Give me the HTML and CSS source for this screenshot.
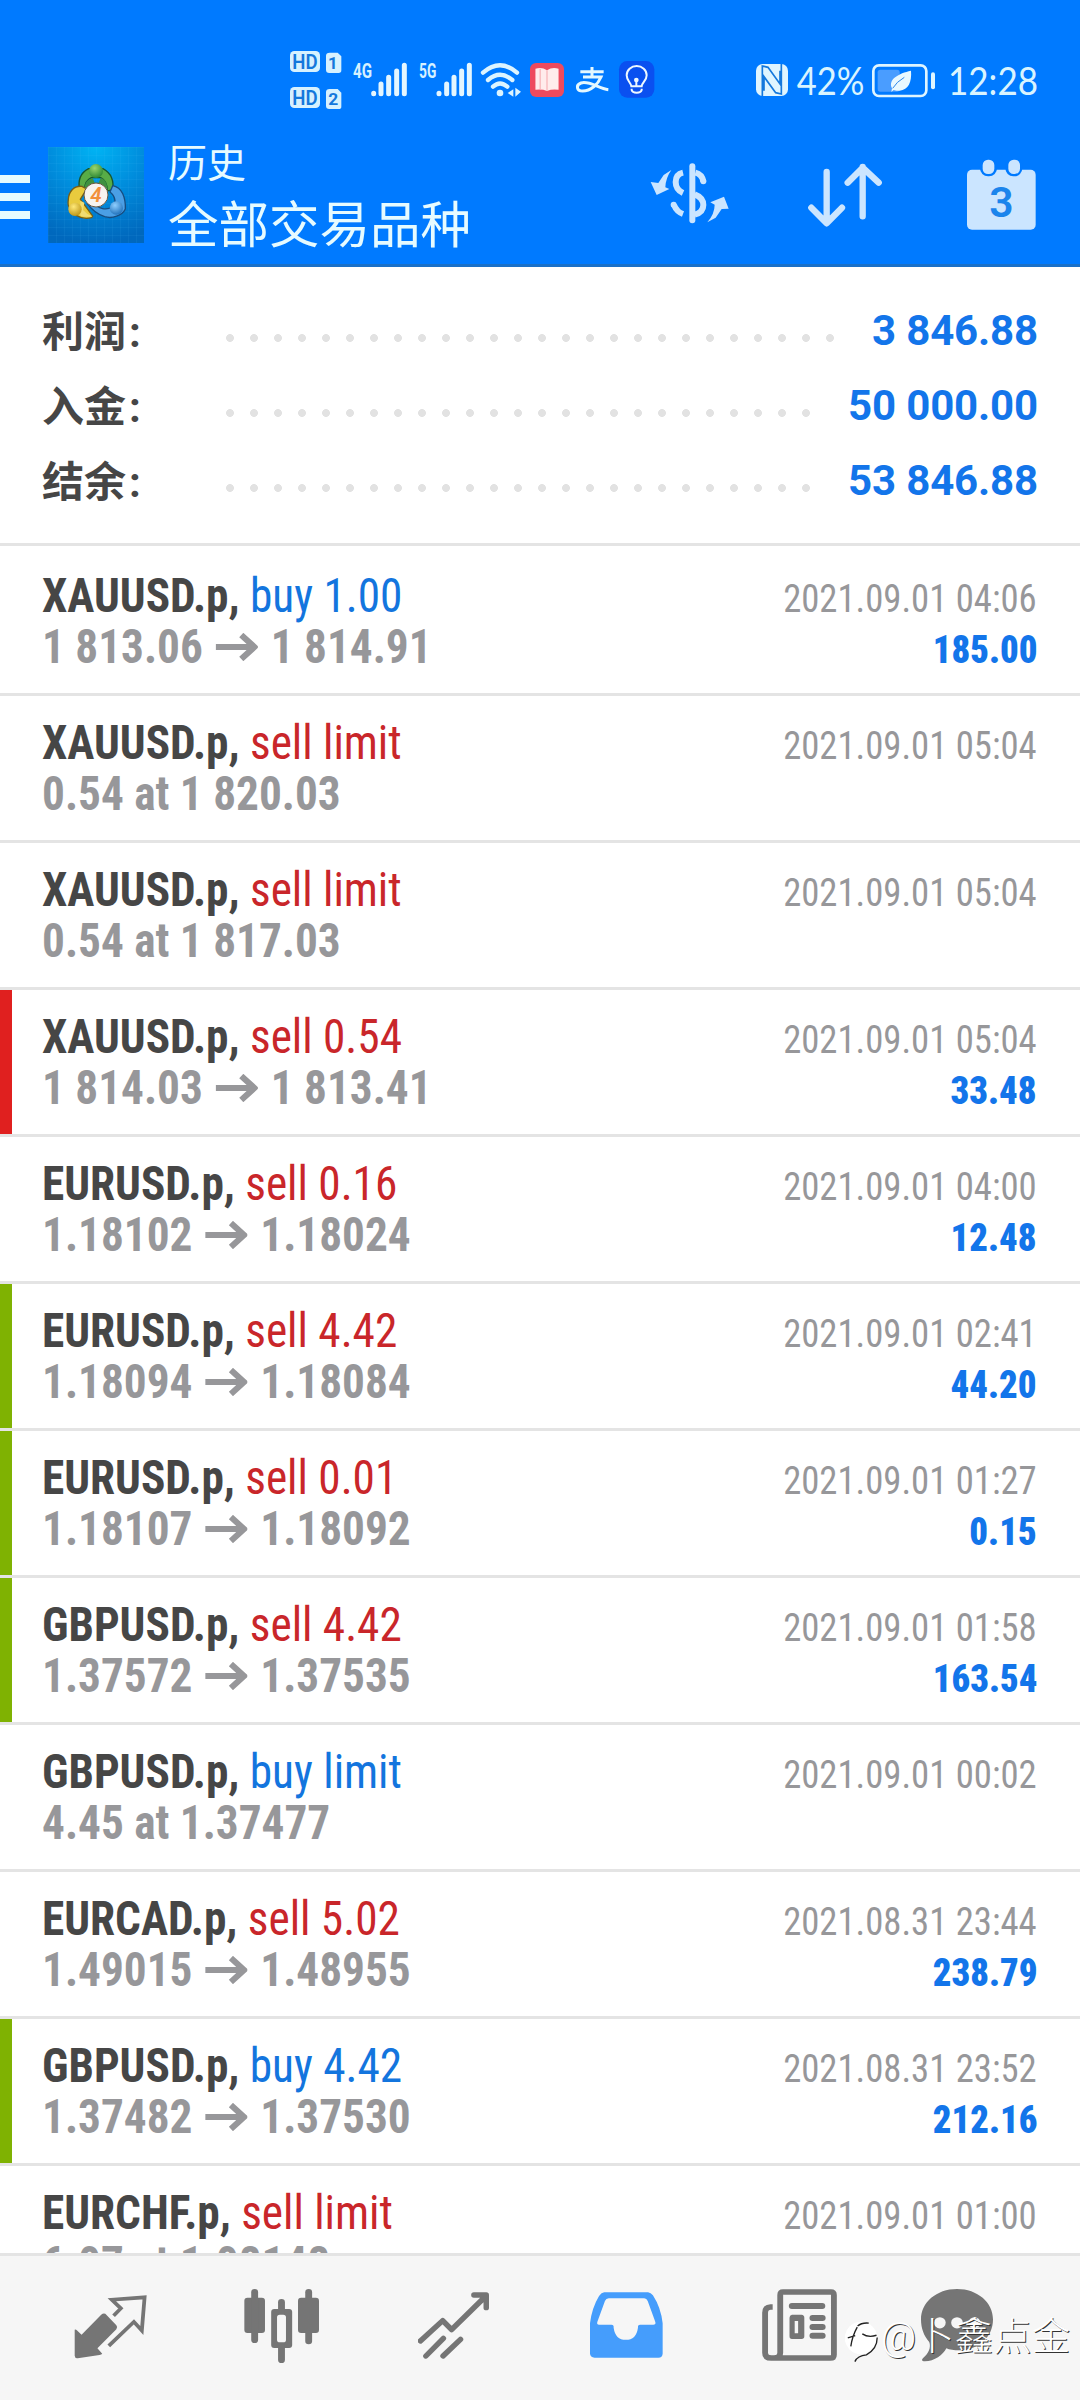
FILE: index.html
```html
<!DOCTYPE html>
<html lang="zh-CN">
<head>
<meta charset="utf-8">
<title>历史</title>
<link rel="stylesheet" href="styles.css">
</head>
<body>
<div class="screen">
  <header class="top">
    <div class="statusbar">
      <svg class="st-hd" width="52" height="58" viewBox="0 0 156 174">
        <g fill="#d6f1ff"><rect x="0" y="0" width="90" height="63" rx="13"/><path d="M119 5h24l11 11v42q0 8-8 8h-28q-10 0-10-9V14q0-9 11-9z"/><rect x="0" y="108" width="90" height="63" rx="13"/><path d="M119 114h24l11 11v42q0 7-8 7h-28q-10 0-10-9v-42q0-9 11-9z"/></g>
        <g fill="#1478dc" font-family="Roboto" font-weight="600" font-size="59"><text x="7" y="53" textLength="76" lengthAdjust="spacingAndGlyphs">HD</text><text x="7" y="161" textLength="76" lengthAdjust="spacingAndGlyphs">HD</text><text x="114" y="53" font-size="49" font-weight="700" textLength="29" lengthAdjust="spacingAndGlyphs">1</text><text x="115" y="163" font-size="49" font-weight="700" textLength="30" lengthAdjust="spacingAndGlyphs">2</text></g>
      </svg>
      <svg class="st-4g" width="54" height="34" viewBox="0 0 162 102">
        <text x="0" y="44" font-family="Roboto" font-weight="700" font-size="59" fill="#d6f1ff" textLength="57" lengthAdjust="spacingAndGlyphs">4G</text>
        <path d="M62 91v1M84 63v29M107 43v49M131 24v68M154 7v85" stroke="#e4f6ff" stroke-width="15" stroke-linecap="round"/>
      </svg>
      <svg class="st-5g" width="54" height="34" viewBox="0 0 162 102">
        <text x="0" y="44" font-family="Roboto" font-weight="700" font-size="59" fill="#d6f1ff" textLength="52" lengthAdjust="spacingAndGlyphs">5G</text>
        <path d="M60 91v1M83 63v29M105 43v49M128 24v68M151 7v85" stroke="#e4f6ff" stroke-width="15" stroke-linecap="round"/>
      </svg>
      <svg class="st-wifi" width="41" height="34" viewBox="0 0 123 102">
        <path d="M6 29Q57-15 108 29M21 51Q57 20 94 51M36 71Q57 52 79 71" fill="none" stroke="#dcf4ff" stroke-width="13" stroke-linecap="round"/><circle cx="57" cy="90" r="10" fill="#dcf4ff"/><path d="M97 79v22l-17-11zM103 74v27l17-15z" fill="#dcf4ff"/>
      </svg>
      <svg class="st-book" width="34" height="34" viewBox="0 0 100 100"><rect width="100" height="100" rx="18" fill="#ee4a5e"/><path d="M16 17q18-6 34 4 16-10 34-4v62q-18-3-34 3-16-6-34-3z" fill="#ffecec"/><path d="M50 21v61M30 17v60" stroke="#f8b9bd" stroke-width="4"/></svg>
      <svg class="st-zhi" width="34" height="26" viewBox="0 0 100 78"><g fill="none" stroke="#e4f8ff" stroke-width="9"><path d="M12 14h70M47 0v30M20 30h54C65 52 43 72 19 72 0 72-2 54 14 48c25-8 53 17 82 20"/></g></svg>
      <svg class="st-bulb" width="36" height="37" viewBox="0 0 108 111"><rect width="106" height="110" rx="25" fill="#0a50f0"/><g fill="none" stroke="#eef8ff" stroke-width="6"><path d="M37 76c-2-13-14-17-14-33a30 28 0 0 1 60 0c0 16-13 20-15 33zM38 83v4q2 8 15 8t15-8v-4M52 55v20"/></g><circle cx="52" cy="57" r="7" fill="#eef8ff"/></svg>
      <svg class="st-nfc" width="32" height="32" viewBox="0 0 96 96"><rect width="96" height="96" rx="20" fill="#dff5ff"/><path d="M19 96V6l17 4 36 50V20M76 0v90l-17-4L24 38v42" fill="none" stroke="#1478dc" stroke-width="5"/></svg>
      <svg class="st-pct" width="67" height="34" viewBox="0 0 201 102"><text x="-4" y="91" font-family="Lato" font-size="113" fill="#d9f4ff" textLength="203" lengthAdjust="spacingAndGlyphs">42%</text></svg>
      <svg class="st-bat" width="63" height="34" viewBox="0 0 189 102"><rect x="4" y="4" width="159" height="92" rx="17" fill="none" stroke="#dff5ff" stroke-width="8"/><rect x="17" y="17" width="66" height="66" rx="8" fill="#4a9dff"/><path d="M117 20c3 34-8 57-34 60-9 1-15-1-18-2l-7 6 2-11c-13-27 20-45 57-53z" fill="#eaf9ff"/><path d="M62 73q12-20 35-33" fill="none" stroke="#2d87ea" stroke-width="3"/><rect x="177" y="25" width="12" height="51" rx="6" fill="#dff5ff"/></svg>
      <svg class="st-time" width="88" height="34" viewBox="0 0 264 102"><text x="-9" y="91" font-family="Lato" font-size="113" fill="#d9f4ff" textLength="270" lengthAdjust="spacingAndGlyphs">12:28</text></svg>
    </div>
    <div class="appbar">
      <svg class="burger" width="30" height="44" viewBox="0 0 30 44"><path d="M0 4h30M0 22h30M0 40h30" stroke="#e6fbff" stroke-width="8"/></svg>
      <svg class="logo" width="96" height="96" viewBox="0 0 288 288">
        <defs>
          <radialGradient id="sky" cx=".5" cy="0" r="1"><stop offset="0" stop-color="#00b4f4"/><stop offset=".5" stop-color="#008cdc"/><stop offset="1" stop-color="#0068bd"/></radialGradient>
          <radialGradient id="gr" cx=".4" cy=".3" r=".8"><stop offset="0" stop-color="#9ad66f"/><stop offset="1" stop-color="#1f7d2c"/></radialGradient>
          <radialGradient id="ye" cx=".4" cy=".3" r=".8"><stop offset="0" stop-color="#ffe978"/><stop offset="1" stop-color="#b78d0d"/></radialGradient>
          <radialGradient id="bl" cx=".4" cy=".3" r=".8"><stop offset="0" stop-color="#8fcfff"/><stop offset="1" stop-color="#1467b4"/></radialGradient>
          <pattern id="grid" width="24" height="24" patternUnits="userSpaceOnUse"><path d="M0 0h24M0 0v24" stroke="#5cc8ff" stroke-opacity=".22" stroke-width="2"/></pattern>
        </defs>
        <rect width="288" height="288" fill="url(#sky)"/><rect width="288" height="288" fill="url(#grid)"/>
        <path d="M122 65c-28 14-32 40-27 65l15-4c0-16 8-28 20-34h28c16 8 20 22 20 40l15-3c6-25-2-50-28-64z" fill="#58ac46" stroke="#18562d" stroke-width="4"/>
        <path d="M110 126c0-20 10-30 24-33l6 14h12l6-14c14 4 20 16 20 36z" fill="#3f9140"/>
        <path d="M102 118c-25-3-40 17-41 39-1 8-2 18 2 22 7 21 30 35 52 35 12 0 19-3 19-7l-37-50 19-31z" fill="#e9cb3e" stroke="#765e16" stroke-width="4"/>
        <path d="M194 116c29 5 39 37 38 70-9 20-40 30-62 23-22-8-41-23-52-40l16-6c17 25 42 27 59 17 11-9 12-29-7-45z" fill="#4b9fe5" stroke="#174d80" stroke-width="4"/>
        <path d="M97 161l12 6-4 22q10 12 28 19-18 4-36-2z" fill="#f0dc72"/>
        <circle cx="144" cy="72" r="21" fill="url(#gr)"/><circle cx="81" cy="187" r="20" fill="url(#ye)"/><circle cx="205" cy="183" r="20" fill="url(#bl)"/>
        <circle cx="144" cy="144" r="36" fill="#f7f3f0" stroke="#6b5a45" stroke-width="3"/>
        <text x="144" y="165" text-anchor="middle" font-family="Roboto" font-style="italic" font-weight="600" font-size="62" fill="#f2903a">4</text>
      </svg>
      <div class="titles"><div class="t1">历史</div><div class="t2">全部交易品种</div></div>
      <div class="actions">
        <svg width="79" height="62" viewBox="0 0 237 186"><g fill="none" stroke="#cbe5ff" stroke-width="18"><path d="M127 10v162" stroke-linecap="round"/><path d="M99 29Q77 34 77 57T99 90M72 126Q80 146 99 153M136 29Q156 34 160 55M134 94Q160 104 160 126T134 155"/></g><g fill="#cbe5ff"><circle cx="160" cy="55" r="9"/><circle cx="71" cy="125" r="9"/><path d="M64 21 41 36 25 60 2 57l18 39 38-18-12-5q1-28 18-52zM172 178l25-14 18-26 21-1-14-36-41 17 13 7q0 27-22 53z"/></g></svg>
        <svg width="74" height="64" viewBox="0 0 222 192"><path d="M56 27v150M10 134l46 47 46-47M164 160V12M119 59l45-45 48 45" fill="none" stroke="#cbe5ff" stroke-width="19" stroke-linecap="round" stroke-linejoin="round"/></svg>
        <svg width="69" height="72" viewBox="0 0 207 216"><rect y="32" width="206" height="180" rx="15" fill="#cbe5ff"/><rect x="39" y="-6" width="51" height="58" rx="24" fill="#007aff"/><rect x="115" y="-6" width="51" height="58" rx="24" fill="#007aff"/><rect x="47" y="2" width="35" height="43" rx="16" fill="#cbe5ff"/><rect x="124" y="2" width="35" height="43" rx="16" fill="#cbe5ff"/><text x="103" y="173" text-anchor="middle" font-family="Roboto" font-weight="600" font-size="128" fill="#1b84ec">3</text></svg>
      </div>
    </div>
  </header>

  <section class="summary">
    <div class="sum"><b>利润<i>:</i></b><span class="dots d26"></span><strong>3 846.88</strong></div>
    <div class="sum"><b>入金<i>:</i></b><span class="dots"></span><strong>50 000.00</strong></div>
    <div class="sum"><b>结余<i>:</i></b><span class="dots"></span><strong>53 846.88</strong></div>
  </section>

  <main class="list">
    <article class="row"><div class="ln"><p><b>XAUUSD.p,</b> <em class="buy">buy 1.00</em></p><time>2021.09.01 04:06</time></div><div class="ln sub"><p>1 813.06<svg class="arr"><use href="#arrow"/></svg>1 814.91</p><strong>185.00</strong></div></article>
    <article class="row"><div class="ln"><p><b>XAUUSD.p,</b> <em>sell limit</em></p><time>2021.09.01 05:04</time></div><div class="ln sub"><p>0.54 at 1 820.03</p></div></article>
    <article class="row"><div class="ln"><p><b>XAUUSD.p,</b> <em>sell limit</em></p><time>2021.09.01 05:04</time></div><div class="ln sub"><p>0.54 at 1 817.03</p></div></article>
    <article class="row sl"><div class="ln"><p><b>XAUUSD.p,</b> <em>sell 0.54</em></p><time>2021.09.01 05:04</time></div><div class="ln sub"><p>1 814.03<svg class="arr"><use href="#arrow"/></svg>1 813.41</p><strong>33.48</strong></div></article>
    <article class="row"><div class="ln"><p><b>EURUSD.p,</b> <em>sell 0.16</em></p><time>2021.09.01 04:00</time></div><div class="ln sub"><p>1.18102<svg class="arr"><use href="#arrow"/></svg>1.18024</p><strong>12.48</strong></div></article>
    <article class="row tp"><div class="ln"><p><b>EURUSD.p,</b> <em>sell 4.42</em></p><time>2021.09.01 02:41</time></div><div class="ln sub"><p>1.18094<svg class="arr"><use href="#arrow"/></svg>1.18084</p><strong>44.20</strong></div></article>
    <article class="row tp"><div class="ln"><p><b>EURUSD.p,</b> <em>sell 0.01</em></p><time>2021.09.01 01:27</time></div><div class="ln sub"><p>1.18107<svg class="arr"><use href="#arrow"/></svg>1.18092</p><strong>0.15</strong></div></article>
    <article class="row tp"><div class="ln"><p><b>GBPUSD.p,</b> <em>sell 4.42</em></p><time>2021.09.01 01:58</time></div><div class="ln sub"><p>1.37572<svg class="arr"><use href="#arrow"/></svg>1.37535</p><strong>163.54</strong></div></article>
    <article class="row"><div class="ln"><p><b>GBPUSD.p,</b> <em class="buy">buy limit</em></p><time>2021.09.01 00:02</time></div><div class="ln sub"><p>4.45 at 1.37477</p></div></article>
    <article class="row"><div class="ln"><p><b>EURCAD.p,</b> <em>sell 5.02</em></p><time>2021.08.31 23:44</time></div><div class="ln sub"><p>1.49015<svg class="arr"><use href="#arrow"/></svg>1.48955</p><strong>238.79</strong></div></article>
    <article class="row tp"><div class="ln"><p><b>GBPUSD.p,</b> <em class="buy">buy 4.42</em></p><time>2021.08.31 23:52</time></div><div class="ln sub"><p>1.37482<svg class="arr"><use href="#arrow"/></svg>1.37530</p><strong>212.16</strong></div></article>
    <article class="row"><div class="ln"><p><b>EURCHF.p,</b> <em>sell limit</em></p><time>2021.09.01 01:00</time></div><div class="ln sub"><p>6.07 at 1.08148</p></div></article>
  </main>

  <nav class="tabs">
    <svg class="i1" width="73" height="64" viewBox="214 434 212 191" preserveAspectRatio="none"><path d="M305 490 337 524q5 6 0 12L282 593l14 16q-2 3-8 4l-63 10q-8 1-9-8V538q2-3 7 2l13 13 57-60q6-6 12-3z" fill="#757575"/><path d="M329 496 350 474 324 448 419 441 411 540 388 514 315 586" fill="none" stroke="#757575" stroke-width="11"/></svg>
    <svg class="i2" width="75" height="74" viewBox="708 417 218 222" preserveAspectRatio="none"><g fill="#757575"><rect x="709" y="443" width="60" height="106" rx="9"/><rect x="729" y="417" width="20" height="162" rx="10"/><rect x="865" y="443" width="61" height="106" rx="9"/><rect x="886" y="417" width="20" height="166" rx="10"/><rect x="787" y="477" width="61" height="117" rx="9"/><rect x="807" y="447" width="20" height="192" rx="10"/></g><rect x="804" y="494" width="26" height="83" rx="8" fill="#f6f6f6"/></svg>
    <svg class="i3" width="71" height="67" viewBox="1213 425 207 201" preserveAspectRatio="none"><path d="M1220 572 1285 511 1311 538 1411 437M1376 434h36v38M1236 617l51-53M1286 617l51-50" fill="none" stroke="#757575" stroke-width="16" stroke-linecap="round" stroke-linejoin="round"/></svg>
    <svg class="i4" width="73" height="66" viewBox="147 425 210 200" preserveAspectRatio="none"><path fill-rule="evenodd" d="M188 426H314Q322 427 328 435 351 472 356 520V612q-1 12-12 12H160q-12-1-13-12V520Q152 474 173 437q7-10 15-11zM201 444q-8 1-11 8L168 516q-2 8 5 8h36q7 0 6 9 5 37 35 37t35-37q-1-9 6-9h38q8 0 6-8L313 452q-3-7-10-8z" fill="#459dfc"/></svg>
    <svg class="i5" width="75" height="72" viewBox="646 417 218 216" preserveAspectRatio="none"><g fill="none" stroke="#757575" stroke-width="16"><path d="M677 471h-6q-16 1-16 17v120q0 16 18 16H845q10 0 10-10V435q0-9-9-9H707q-8 0-8 9v173q0 16-18 16" stroke-width="17"/><path d="M733 468h88M793 504h29M793 531h29M793 557h29" stroke-width="18" stroke-linecap="round"/></g><path fill-rule="evenodd" d="M733 494h28q8 1 8 9v56q0 8-8 8h-28q-7 0-7-8v-56q0-8 7-9zm8 19v37h10v-37z" fill="#757575"/></svg>
    <svg class="i6" width="72" height="73" viewBox="1108 417 210 218" preserveAspectRatio="none"><path d="M1213 417c60 0 105 40 105 91 0 54-45 92-99 92-14 0-28-2-37-6-10 19-34 39-63 39-9 0-10-6-4-11 15-13 23-31 17-47-16-18-24-42-24-67 0-51 45-91 105-91z" fill="#757575"/><g fill="#f6f6f6"><circle cx="1163" cy="518" r="17"/><circle cx="1213" cy="518" r="17"/><circle cx="1264" cy="518" r="17"/></g></svg>
    <div class="mark">
      <svg width="36" height="46" viewBox="886 508 104 136"><circle cx="932" cy="567" r="48" fill="#fff"/><path d="M893 567l22-7M921 535Q906 562 902 592M922 532q12-11 33-9M936 555q18 12 42 4M980 566q0 34-32 51-26 2-34 20" fill="none" stroke="#222" stroke-width="4"/></svg>
      <span>@卜鑫点金</span>
    </div>
  </nav>
</div>
<svg class="defs" width="0" height="0"><symbol id="arrow" viewBox="0 0 42 28" preserveAspectRatio="none"><path d="M0 14h39M25.500 2 38.500 14 25.500 26" fill="none" stroke="#97979a" stroke-width="6"/></symbol></svg>
</body>
</html>
```
FILE: styles.css
```css
body { margin: 0; background: #fff; }
svg { display: block; flex: none; }
.defs { position: absolute; }
.screen { width: 1080px; height: 2400px; overflow: hidden; display: flex; flex-direction: column; font-family: Roboto, "Noto Sans CJK SC", sans-serif; }

.top { flex: none; height: 264px; background: #007aff; border-bottom: 3px solid #1a70c8; display: flex; flex-direction: column; }
.statusbar { height: 132px; display: flex; align-items: flex-start; padding-left: 290px; }
.statusbar svg { overflow: visible; }
.st-hd { margin-top: 51px; }
.st-4g { margin: 63px 0 0 11px; }
.st-5g { margin: 63px 0 0 12px; }
.st-wifi { margin: 63px 0 0 8px; }
.st-book { margin: 63px 0 0 8px; }
.st-zhi { margin: 67px 0 0 12px; }
.st-bulb { margin: 61px 0 0 9px; }
.st-nfc { margin: 64px 0 0 101px; }
.st-pct { margin: 65px 0 0 10px; }
.st-bat { margin: 64px 0 0 7px; }
.st-time { margin: 65px 0 0 16px; }

.appbar { height: 132px; display: flex; align-items: flex-start; }
.burger { margin-top: 43px; }
.logo { margin: 15px 0 0 18px; }
.titles { flex: 1; margin-left: 24px; color: #e6fbff; font-family: "Noto Sans CJK SC", sans-serif; }
.t1 { font-size: 39px; line-height: 48px; margin-top: 4px; }
.t2 { font-size: 50.500px; line-height: 60px; margin-top: 7px; }
.actions { display: flex; align-items: flex-start; width: 430px; }
.actions svg:nth-child(1) { margin-top: 31px; }
.actions svg:nth-child(2) { margin: 31px 0 0 79px; }
.actions svg:nth-child(3) { margin: 27px 0 0 85px; }

.summary { flex: none; height: 250px; padding: 26px 42px 0; border-bottom: 3px solid #e4e4e4; }
.sum { display: flex; align-items: center; height: 75px; }
.sum b { width: 184px; font: 700 42px/60px "Noto Sans CJK SC", sans-serif; color: #464646; }
.sum i { font-style: normal; font-family: Roboto, sans-serif; margin-left: 3px; }
.dots { width: 600px; height: 8px; margin: 15px 0 0 -8px; background: radial-gradient(circle closest-side, #e2e2e2 0 3.600px, transparent 4.200px) 0 0 / 24px 8px repeat-x; }
.dots.d26 { width: 624px; }
.sum strong { margin-left: auto; font: 700 42px/60px Roboto, sans-serif; letter-spacing: -.15px; color: #1375ea; white-space: nowrap; }

.list { flex: 1; min-height: 0; overflow: hidden; padding-top: 3px; }
.row { box-sizing: border-box; height: 147px; padding: 21px 43px 0 42px; border-bottom: 3px solid #e4e4e4; font-stretch: 75%; }
.row.sl { background: linear-gradient(#e0201f, #e0201f) 0 0 / 12px 100% no-repeat padding-box; }
.row.tp { background: linear-gradient(#7fb202, #7fb202) 0 0 / 12px 100% no-repeat padding-box; }
.ln { display: flex; align-items: baseline; justify-content: space-between; height: 51px; line-height: 51px; font-size: 48px; white-space: nowrap; }
.ln p { margin: 0; transform: scaleX(.943); transform-origin: 0 0; }
.ln b { color: #464646; }
.ln em { font-style: normal; color: #c9262a; }
.ln em.buy { color: #1375de; }
.ln time, .sub strong { font-size: 39px; transform: scaleX(.94); transform-origin: 100% 0; }
.ln time { color: #97979a; }
.sub { color: #97979a; font-weight: 700; }
.sub strong { color: #1375ea; }
.arr { display: inline-block; width: 45px; height: 28px; margin: 0 14px 0 13px; vertical-align: 2px; }

.tabs { position: relative; flex: none; height: 144px; border-top: 3px solid #e4e4e4; background: #f6f6f6; display: flex; align-items: flex-start; padding-left: 74px; }
.i1 { margin-top: 39px; }
.i2 { margin: 33px 0 0 97px; }
.i3 { margin: 36px 0 0 99px; }
.i4 { margin: 36px 0 0 101px; }
.i5 { margin: 33px 0 0 99px; }
.i6 { margin: 33px 0 0 84px; }
.mark { position: absolute; left: 845px; top: 62px; display: flex; align-items: flex-start; font: 300 38.500px/46px Roboto, "Noto Sans CJK SC", sans-serif; color: #fff; text-shadow: 1px 1px 0 #333; white-space: nowrap; }
.mark span { margin-top: -4px; }
```
